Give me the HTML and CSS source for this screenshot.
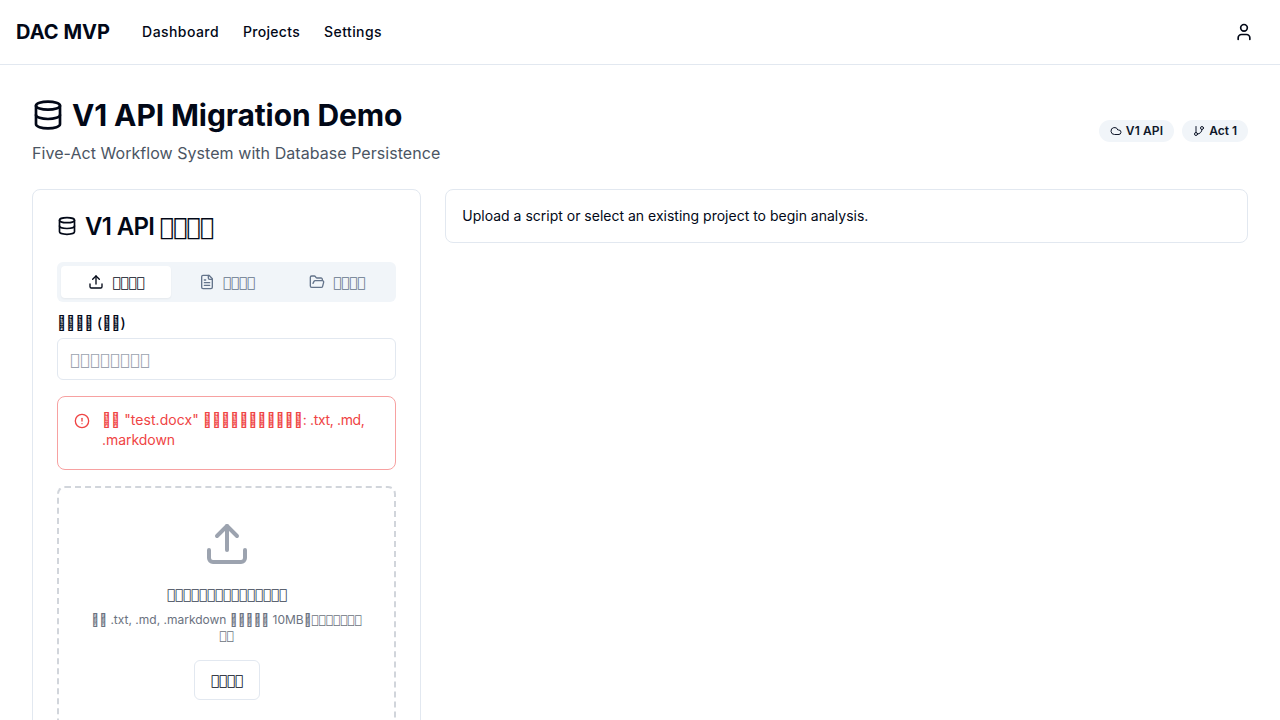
FILE: index.html
```
<!DOCTYPE html>
<html lang="en">
<head>
<meta charset="utf-8">
<title>DAC MVP</title>
<link rel="stylesheet" href="styles.css">
</head>
<body>
<header class="topbar">
  <div class="brand">DAC MVP</div>
  <nav class="nav"><a>Dashboard</a><a class="projects">Projects</a><a>Settings</a></nav>
  <button class="user"><svg class="icon i20" viewBox="0 0 24 24"><path d="M19 21v-2a4 4 0 0 0-4-4H9a4 4 0 0 0-4 4v2"/><circle cx="12" cy="7" r="4"/></svg></button>
</header>
<main class="page">
  <div class="heading">
    <div>
      <h1><svg class="icon i32" viewBox="0 0 24 24"><ellipse cx="12" cy="5" rx="9" ry="3"/><path d="M3 5V19A9 3 0 0 0 21 19V5"/><path d="M3 12A9 3 0 0 0 21 12"/></svg>V1 API Migration Demo</h1>
      <p class="sub">Five-Act Workflow System with Database Persistence</p>
    </div>
    <div class="badges">
      <span class="badge api"><svg class="icon i12" viewBox="0 0 24 24"><path d="M17.5 19H9a7 7 0 1 1 6.71-9h1.79a4.5 4.5 0 1 1 0 9Z"/></svg>V1 API</span>
      <span class="badge"><svg class="icon i12" viewBox="0 0 24 24"><line x1="6" x2="6" y1="3" y2="15"/><circle cx="18" cy="6" r="3"/><circle cx="6" cy="18" r="3"/><path d="M18 9a9 9 0 0 1-9 9"/></svg>Act 1</span>
    </div>
  </div>
  <div class="grid">
    <section class="card">
      <h2><svg class="icon i20" viewBox="0 0 24 24"><ellipse cx="12" cy="5" rx="9" ry="3"/><path d="M3 5V19A9 3 0 0 0 21 19V5"/><path d="M3 12A9 3 0 0 0 21 12"/></svg><span class="title-text">V1 API <span class="box">&#xE000;&#xE000;&#xE000;&#xE000;</span></span></h2>
      <div class="tabs">
        <button class="tab active"><svg class="icon i16" viewBox="0 0 24 24"><path d="M21 15v4a2 2 0 0 1-2 2H5a2 2 0 0 1-2-2v-4"/><path d="m17 8-5-5-5 5"/><path d="M12 3v12"/></svg><span class="box">&#xE000;&#xE000;&#xE000;&#xE000;</span></button>
        <button class="tab"><svg class="icon i16" viewBox="0 0 24 24"><path d="M15 2H6a2 2 0 0 0-2 2v16a2 2 0 0 0 2 2h12a2 2 0 0 0 2-2V7Z"/><path d="M14 2v4a2 2 0 0 0 2 2h4"/><path d="M10 9H8"/><path d="M16 13H8"/><path d="M16 17H8"/></svg><span class="box">&#xE000;&#xE000;&#xE000;&#xE000;</span></button>
        <button class="tab"><svg class="icon i16" viewBox="0 0 24 24"><path d="m6 14 1.500-2.900A2 2 0 0 1 9.240 10H20a2 2 0 0 1 1.940 2.500l-1.540 6a2 2 0 0 1-1.950 1.500H4a2 2 0 0 1-2-2V5a2 2 0 0 1 2-2h3.900a2 2 0 0 1 1.690.900l.810 1.200a2 2 0 0 0 1.670.900H18a2 2 0 0 1 2 2v2"/></svg><span class="box">&#xE000;&#xE000;&#xE000;&#xE000;</span></button>
      </div>
      <label class="label"><span class="hex">&#xF8FE;&#xF8FE;&#xF8FE;&#xF8FE;</span> (<span class="hex">&#xF8FE;&#xF8FE;</span>)</label>
      <div class="input"><span class="box">&#xE000;&#xE000;&#xE000;&#xE000;&#xE000;&#xE000;&#xE000;&#xE000;</span></div>
      <div class="alert"><svg class="icon i16" viewBox="0 0 24 24"><circle cx="12" cy="12" r="10"/><line x1="12" x2="12" y1="8" y2="12"/><line x1="12" x2="12.010" y1="16" y2="16"/></svg>
        <p><span class="hex">&#xF8FE;&#xF8FE;</span> "test.docx" <span class="hex">&#xF8FE;&#xF8FE;&#xF8FE;&#xF8FE;&#xF8FE;&#xF8FE;&#xF8FE;&#xF8FE;&#xF8FE;&#xF8FE;&#xF8FE;</span><span class="formats">: .txt, .md,<br></span><span class="ext">.markdown</span></p></div>
      <div class="drop">
        <svg class="icon i48" viewBox="0 0 24 24"><path d="M21 15v4a2 2 0 0 1-2 2H5a2 2 0 0 1-2-2v-4"/><path d="m17 8-5-5-5 5"/><path d="M12 3v12"/></svg>
        <p class="drop-title"><span class="box">&#xE000;&#xE000;&#xE000;&#xE000;&#xE000;&#xE000;&#xE000;&#xE000;&#xE000;&#xE000;&#xE000;&#xE000;&#xE000;&#xE000;&#xE000;</span></p>
        <p class="drop-hint"><span class="hex">&#xF8FE;&#xF8FE;</span> .txt, .md, .markdown <span class="hex">&#xF8FE;&#xF8FE;&#xF8FE;&#xF8FE;&#xF8FE;</span> 10MB<span class="hex">&#xF8FE;</span><span class="box">&#xE000;&#xE000;&#xE000;&#xE000;&#xE000;&#xE000;&#xE000;</span><br><span class="box">&#xE000;&#xE000;</span></p>
        <button class="pick"><span class="box">&#xE000;&#xE000;&#xE000;&#xE000;</span></button>
      </div>
    </section>
    <div class="notice">Upload a script or select an existing project to begin analysis.</div>
  </div>
</main>
</body>
</html>
```

FILE: styles.css
```
*{box-sizing:border-box;margin:0;padding:0}
body{font-family:Inter,sans-serif;color:#020817;background:#fff;font-size:16px;line-height:24px;height:720px;overflow:hidden}
button{font:inherit;color:inherit;background:none;border:0}
.box{font-family:"DejaVu Sans",sans-serif;font-weight:400}
.hex{font-family:Inter,sans-serif;letter-spacing:-.1px}
.icon{display:block;flex:none;fill:none;stroke:currentColor;stroke-width:2;stroke-linecap:round;stroke-linejoin:round}
.i12{width:12px;height:12px}.i16{width:16px;height:16px}.i20{width:20px;height:20px}.i32{width:32px;height:32px}.i48{width:48px;height:48px}
.topbar{height:65px;border-bottom:1px solid #e2e8f0;display:flex;align-items:center;padding:0 16px}
.brand{font-size:20px;font-weight:700;line-height:28px;margin-right:32px;letter-spacing:.05px}
.nav{display:flex;gap:24px;font-size:14px;font-weight:500;line-height:20px;letter-spacing:.43px}
.projects{letter-spacing:.3px}
.user{margin-left:auto;width:40px;height:40px;display:flex;align-items:center;justify-content:center}
.page{padding:32px}
.heading{display:flex;justify-content:space-between;align-items:center;margin-bottom:24px}
h1{display:flex;align-items:center;gap:8px;font-size:30px;line-height:36px;font-weight:700;letter-spacing:-.11px}
.sub{margin-top:8px;color:#4b5563;letter-spacing:.05px}
.badges{display:flex;gap:8px}
.badge{display:flex;align-items:center;gap:4px;height:22px;padding:0 11px;border-radius:11px;background:#f1f5f9;color:#0f172a;font-size:12px;line-height:16px;font-weight:600}
.api{letter-spacing:.12px}
.grid{display:grid;grid-template-columns:repeat(3,minmax(0,1fr));gap:24px;align-items:start}
.card{border:1px solid #e2e8f0;border-radius:8px;padding:24px}
h2{display:flex;align-items:center;gap:8px;font-size:24px;line-height:24px;font-weight:600;letter-spacing:-.65px;height:24px}
h2 .box{letter-spacing:-1px;line-height:1}
.title-text{padding-top:1px}
.tabs{display:grid;grid-template-columns:repeat(3,1fr);height:40px;padding:4px;margin-top:24px;border-radius:6px;background:#f1f5f9;color:#64748b}
.tab{display:flex;align-items:center;justify-content:center;gap:8px;font-size:14px;line-height:20px;font-weight:500;border-radius:4px}
.tab .box,.drop-title .box,.pick .box{letter-spacing:-.4px}
.active{background:#fff;color:#020817;box-shadow:0 1px 2px rgba(0,0,0,.05)}
.label{display:block;height:14px;line-height:14px;margin:14px 0 8px;font-size:14px;font-weight:500}
.input{height:42px;border:1px solid #e2e8f0;border-radius:6px;padding:8px 12px;color:#9ca3af;letter-spacing:.4px}
.alert{display:flex;gap:12px;height:74px;margin-top:16px;border:1px solid #f7a1a1;border-radius:8px;padding:16px;color:#ef4444;font-size:14px;line-height:20px;letter-spacing:.06px}
.alert p{margin-top:-3px;white-space:nowrap}
.formats{letter-spacing:-.35px}
.ext{letter-spacing:-.05px}
.drop{display:flex;flex-direction:column;align-items:center;margin-top:16px;border:2px dashed #d1d5db;border-radius:8px;padding:32px;text-align:center}
.drop .i48{color:#9ca3af}
.drop-title{margin-top:16px;font-size:14px;line-height:20px;height:20px;color:#374151}
.drop-hint{margin-top:8px;font-size:12px;line-height:16px;height:32px;color:#6b7280;white-space:nowrap}
.drop-hint .hex{letter-spacing:0}
.pick{margin-top:16px;height:40px;border:1px solid #e2e8f0;border-radius:6px;padding:0 16px;font-size:14px;font-weight:500}
.notice{grid-column:span 2;border:1px solid #e2e8f0;border-radius:8px;padding:16px;height:54px;font-size:14px;line-height:20px}
```
